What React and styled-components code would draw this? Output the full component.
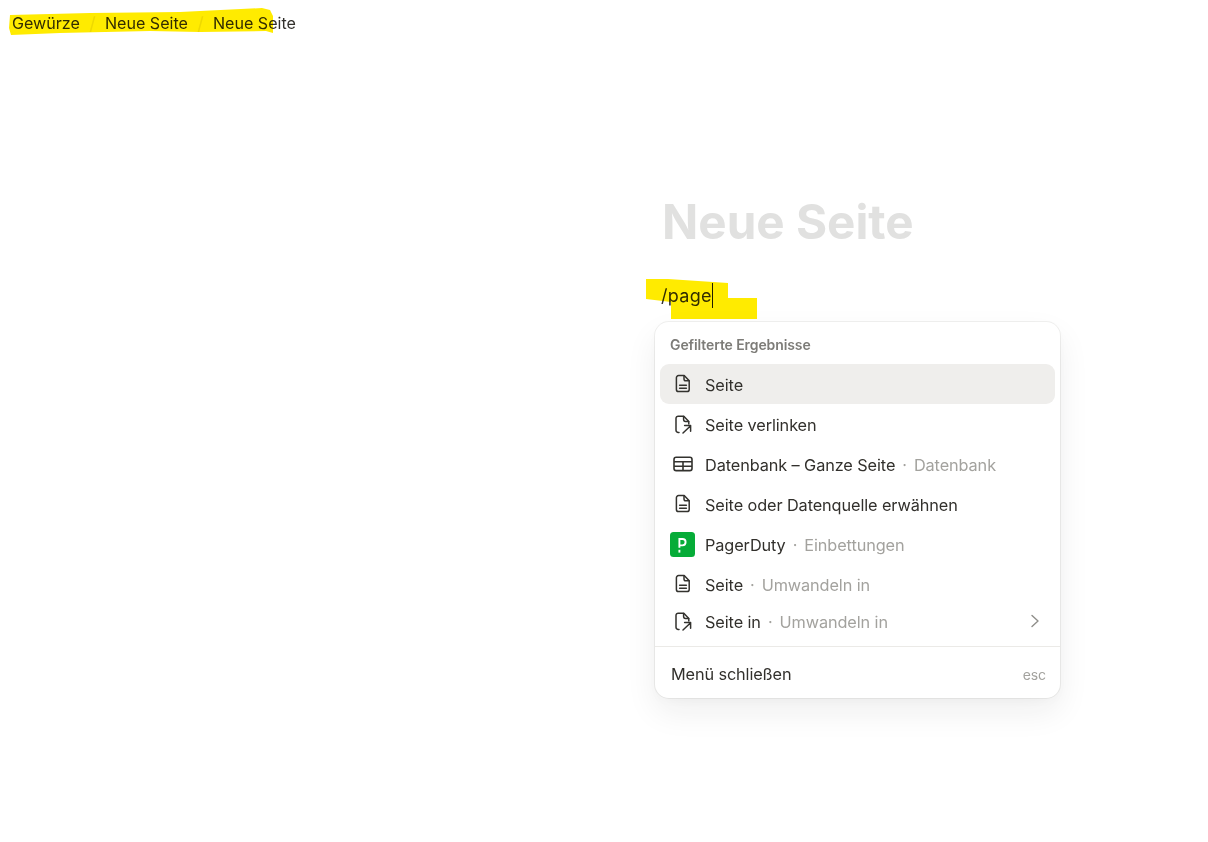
import React from "react";
import styled, { createGlobalStyle } from "styled-components";

const Global = createGlobalStyle`
  html, body { margin: 0; padding: 0; background: #fff; }
  body { font-family: Inter, "Noto Sans", "Liberation Sans", sans-serif; color: #37352f; }
`;
const Page = styled.div`
  position: relative;
  width: 1208px;
  height: 842px;
  overflow: hidden;
  background: #fff;
`;
const Breadcrumb = styled.nav`
  display: flex;
  align-items: center;
  height: 46px;
  padding-left: 12px;
  font-size: 16.1px;
  color: #32302c;
`;
const Slash = styled.span`
  width: 25px;
  text-align: center;
  color: #eeecdc;
  font-size: 18px;
`;
const Column = styled.main`
  margin-left: 655px;
  width: 405px;
  padding-top: 147px;
`;
const Title = styled.h1`
  margin: 0 0 0 7px;
  font-size: 47.6px;
  line-height: 58px;
  font-weight: 700;
  color: #e1e1e0;
`;
const Input = styled.div`
  position: relative;
  display: flex;
  align-items: center;
  height: 28px;
  margin: 30px 0 0 6px;
  font-size: 18px;
  letter-spacing: 0.3px;
  color: #32302c;
`;
const Caret = styled.span`
  display: inline-block;
  width: 1px;
  height: 25px;
  background: #1f1e1b;
`;
const Menu = styled.section`
  margin-top: 13px;
  height: 376px;
  box-sizing: border-box;
  background: #fff;
  border-radius: 14px;
  box-shadow: 0 0 0 1px rgba(55, 53, 47, 0.07), 0 14px 32px rgba(25, 25, 25, 0.07), 0 4px 10px rgba(25, 25, 25, 0.02);
  display: flex;
  flex-direction: column;
`;
const MenuHead = styled.div`
  height: 42px;
  padding: 14px 15px 0;
  box-sizing: border-box;
  font-size: 14px;
  line-height: 17px;
  font-weight: 600;
  color: #7d7c78;
  letter-spacing: -0.1px;
`;
const List = styled.div`
  padding: 0 5px;
  display: flex;
  flex-direction: column;
`;
const Row = styled.div`
  display: flex;
  align-items: center;
  height: ${p => p.$h || 40}px;
  box-sizing: border-box;
  padding: 0 14px 0 10px;
  border-radius: 9px;
  background: ${p => (p.$active ? "#efeeec" : "transparent")};
  font-size: 16.3px;
  color: #32302c;
  letter-spacing: -0.1px;
`;
const IconSlot = styled.span`
  width: 26px;
  height: 26px;
  margin: 0 ${p => (p.$logo ? 10 : 9)}px 0 ${p => (p.$logo ? -1 : 0)}px;
  flex: none;
  display: flex;
  align-items: center;
  justify-content: center;
  color: #33322e;
`;
const RowText = styled.span`
  padding-top: 2px;
`;
const Hint = styled.span`
  color: #a3a29e;
  &::before {
    content: "·";
    margin: 0 7px;
  }
`;
const Chevron = styled.span`
  margin-left: auto;
  display: flex;
  color: #8f8e8a;
`;
const Divider = styled.hr`
  border: 0;
  height: 1px;
  margin: 8px 0 0;
  background: #ebeae7;
`;
const Footer = styled.div`
  flex: 1;
  display: flex;
  align-items: center;
  justify-content: space-between;
  padding: 3px 14px 0 16px;
  font-size: 16.3px;
  color: #32302c;
  letter-spacing: -0.12px;
`;
const Esc = styled.span`
  font-size: 14px;
  color: #a3a29e;
`;
const Marker = styled.svg`
  position: absolute;
  left: 0;
  top: 0;
  width: 1208px;
  height: 842px;
  pointer-events: none;
  mix-blend-mode: multiply;
`;

const DocIcon = () => (
  <svg width="20" height="20" viewBox="0 0 20 20" fill="none" stroke="currentColor" strokeWidth="1.5" strokeLinejoin="round" strokeLinecap="round">
    <path d="M5.6 1.6h5.6l5 5.2v8.6a2.2 2.2 0 0 1-2.2 2.2H5.6a2.2 2.2 0 0 1-2.2-2.2V3.8a2.2 2.2 0 0 1 2.2-2.2z" />
    <path d="M11 1.8v3.2c0 1 .7 1.8 1.8 1.8h3.2" />
    <path d="M6.6 11.2h6.8M6.6 14.2h6.8" />
  </svg>
);
const LinkIcon = () => (
  <svg width="20" height="20" viewBox="0 0 20 20" fill="none" stroke="currentColor" strokeWidth="1.5" strokeLinejoin="round" strokeLinecap="round">
    <path d="M6 18.4H5.2A2.2 2.2 0 0 1 3 16.2V4.4a2.2 2.2 0 0 1 2.2-2.2h5.6l5 5.2v2.6" />
    <path d="M10.6 2.4v3.2c0 1 .7 1.8 1.8 1.8h3.2" />
    <path d="M10 19l7.4-7M11.6 11.6h6v5.6" />
  </svg>
);
const TableIcon = () => (
  <svg width="20" height="20" viewBox="0 0 20 20" fill="none" stroke="currentColor" strokeWidth="1.6" strokeLinejoin="round">
    <rect x="1" y="3.2" width="18" height="13.4" rx="2.2" />
    <path d="M1 7.8h18M1 12.2h18M10 7.8v8.8" />
  </svg>
);
const PagerDutyIcon = () => (
  <svg width="25" height="25" viewBox="0 0 25 25">
    <rect width="25" height="25" rx="3.5" fill="#06ac38" />
    <path d="M9.4 15.8V7h3c2.1 0 3.2 1 3.2 3.1s-1.1 3.3-3.2 3.3H9.4" fill="none" stroke="#fff" strokeWidth="1.9" />
    <rect x="8.45" y="17.8" width="1.9" height="2.8" fill="#fff" />
  </svg>
);
const ChevronIcon = () => (
  <svg width="12" height="14" viewBox="0 0 12 14" fill="none" stroke="currentColor" strokeWidth="1.4" strokeLinecap="round" strokeLinejoin="round">
    <path d="M3 1.5l6 5.5-6 5.5" />
  </svg>
);

const rows = [
  { icon: <DocIcon />, label: "Seite", active: true },
  { icon: <LinkIcon />, label: "Seite verlinken" },
  { icon: <TableIcon />, label: "Datenbank – Ganze Seite", hint: "Datenbank" },
  { icon: <DocIcon />, label: "Seite oder Datenquelle erwähnen" },
  { icon: <PagerDutyIcon />, label: "PagerDuty", hint: "Einbettungen", logo: true },
  { icon: <DocIcon />, label: "Seite", hint: "Umwandeln in" },
  { icon: <LinkIcon />, label: "Seite in", hint: "Umwandeln in", more: true, h: 34 },
];

export default function App() {
  return (
    <Page>
      <Global />
      <Breadcrumb>
        <span>Gewürze</span>
        <Slash>/</Slash>
        <span>Neue Seite</span>
        <Slash>/</Slash>
        <span>Neue Seite</span>
      </Breadcrumb>
      <Column>
        <Title>Neue Seite</Title>
        <Input>
          /page
          <Caret />
        </Input>
        <Menu>
          <MenuHead>Gefilterte Ergebnisse</MenuHead>
          <List>
            {rows.map((r, i) => (
              <Row key={i} $active={r.active} $h={r.h}>
                <IconSlot $logo={r.logo}>{r.icon}</IconSlot>
                <RowText>
                  {r.label}
                  {r.hint && <Hint>{r.hint}</Hint>}
                </RowText>
                {r.more && (
                  <Chevron>
                    <ChevronIcon />
                  </Chevron>
                )}
              </Row>
            ))}
          </List>
          <Divider />
          <Footer>
            <span>Menü schließen</span>
            <Esc>esc</Esc>
          </Footer>
        </Menu>
      </Column>
      <Marker viewBox="0 0 1208 842">
        <path
          fill="#ffeb00"
          d="M10 15 L90 13 L180 12 L262 8 L270 10 L273 16 L273 33 L266 31 L200 32 L150 31 L60 33 L11 35 L9 28 Z"
        />
        <path
          fill="#ffeb00"
          d="M646 279 L668 279 L728 283 L728 298 L757 298 L757 319 L671 319 L671 302 L646 299 Z"
        />
      </Marker>
    </Page>
  );
}
